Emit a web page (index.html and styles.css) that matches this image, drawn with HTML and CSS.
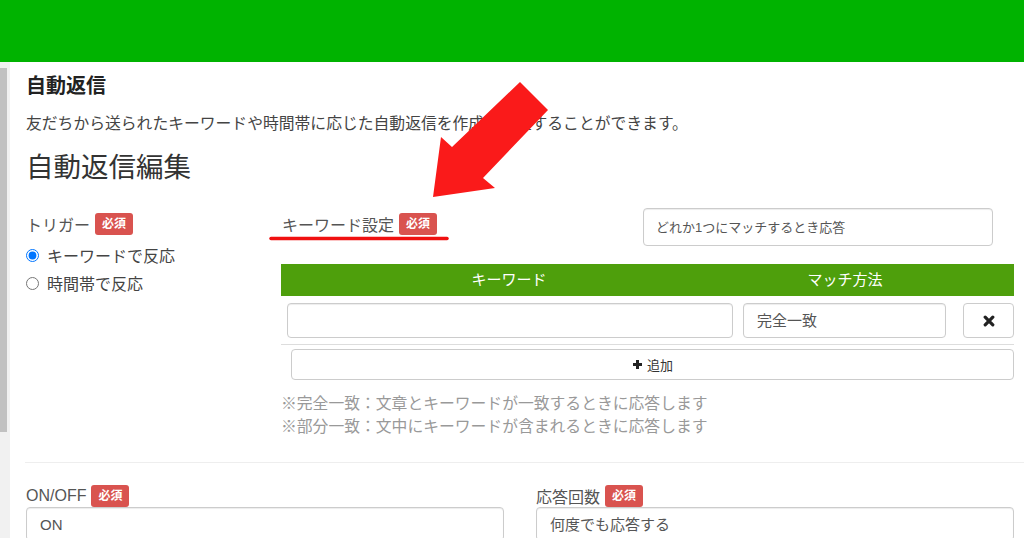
FILE: index.html
```html
<!DOCTYPE html>
<html lang="ja">

<head>
    <meta charset="utf-8">
    <title>自動返信編集</title>
    <link rel="stylesheet" href="styles.css">
</head>

<body>
    <div class="topBar"></div>
    <div class="pageWrapper">
        <div class="sideStrip"><div class="sideThumb"></div></div>
        <div class="mainArea">
            <h2 class="pageTitle">自動返信</h2>
            <p class="pageDesc">友だちから送られたキーワードや時間帯に応じた自動返信を作成・管理することができます。</p>
            <h1 class="editTitle">自動返信編集</h1>

            <div class="triggerForm">
                <div class="triggerCol">
                    <div class="fieldLabel">トリガー<span class="requiredBadge">必須</span></div>
                    <label class="radioRow firstRadio"><input type="radio" name="trigger" checked>キーワードで反応</label>
                    <label class="radioRow"><input type="radio" name="trigger">時間帯で反応</label>
                </div>
                <div class="keywordCol">
                    <div class="keywordTop">
                        <div class="fieldLabel">キーワード設定<span class="requiredBadge">必須</span></div>
                        <select class="formControl matchAny"><option>どれか1つにマッチするとき応答</option></select>
                    </div>
                    <div class="keywordTable">
                        <div class="tableHead">キーワード</div>
                        <div class="tableHead">マッチ方法</div>
                        <div class="tableHead"></div>
                        <div class="tableCell"><input type="text" class="formControl"></div>
                        <div class="tableCell selectCell"><select class="formControl"><option>完全一致</option></select></div>
                        <div class="tableCell cellEnd">
                            <button class="removeButton">
                                <svg width="12" height="12" viewBox="0 0 12 12"><path d="M2.2 2.2L9.8 9.8M9.8 2.2L2.2 9.8" stroke="#222" stroke-width="3.2" stroke-linecap="round"/></svg>
                            </button>
                        </div>
                    </div>
                    <button class="addButton">
                        <svg width="11" height="11" viewBox="0 0 11 11"><path d="M5.5 1v9M1 5.5h9" stroke="#222" stroke-width="3"/></svg>
                        追加
                    </button>
                    <p class="matchNote">※完全一致：文章とキーワードが一致するときに応答します<br>※部分一致：文中にキーワードが含まれるときに応答します</p>
                </div>
            </div>

            <hr class="sectionRule">

            <div class="settingsRow">
                <div class="settingsCol">
                    <div class="fieldLabel">ON/OFF<span class="requiredBadge">必須</span></div>
                    <select class="formControl"><option>ON</option></select>
                </div>
                <div class="settingsCol">
                    <div class="fieldLabel">応答回数<span class="requiredBadge">必須</span></div>
                    <select class="formControl"><option>何度でも応答する</option></select>
                </div>
            </div>
        </div>
    </div>

    <!-- annotation drawn over the screenshot -->
    <svg class="annotation" width="1024" height="538" viewBox="0 0 1024 538">
        <polygon points="520,82 548,110 483,178 495,188 433,197 441,137 452,147" fill="#fa1a1a"/>
        <line x1="271" y1="238.5" x2="447" y2="238.5" stroke="#f01010" stroke-width="3.5" stroke-linecap="round"/>
    </svg>
</body>

</html>
```

FILE: styles.css
```css
body {
    margin: 0;
    font-family: "Liberation Sans", "Noto Sans CJK JP", sans-serif;
    color: #333;
    background-color: #fff;
    overflow: hidden;
}
.topBar {
    height: 62px;
    background-color: #00b300;
}
.pageWrapper {
    display: flex;
}
.sideStrip {
    width: 10px;
    height: 476px;
    flex-shrink: 0;
    background-color: #f1f1f1;
}
.sideThumb {
    width: 7px;
    height: 364px;
    margin-top: 6px;
    background-color: #c1c1c1;
}
.mainArea {
    flex: 1;
    padding: 0 10px 0 16px;
}
.pageTitle {
    margin: 10px 0 0;
    font-size: 20px;
    line-height: 28px;
    font-weight: bold;
    color: #222;
}
.pageDesc {
    margin: 12px 0 0;
    font-size: 15.8px;
    line-height: 24px;
    color: #444;
}
.editTitle {
    margin: 12px 0 0;
    font-size: 27.5px;
    line-height: 40px;
    font-weight: normal;
    color: #333;
}
.triggerForm {
    display: flex;
    margin-top: 20px;
}
.triggerCol {
    width: 255px;
    flex-shrink: 0;
}
.fieldLabel {
    display: flex;
    align-items: center;
    height: 22px;
    margin-top: 5px;
    font-size: 16px;
    color: #555;
}
.requiredBadge {
    display: inline-block;
    width: 38px;
    height: 22px;
    line-height: 22px;
    margin-left: 5px;
    background-color: #d9534f;
    color: #fff;
    border-radius: 3px;
    font-size: 12px;
    font-weight: bold;
    text-align: center;
}
.radioRow {
    display: flex;
    align-items: center;
    height: 28px;
    font-size: 16px;
    color: #444;
}
.firstRadio {
    margin-top: 6px;
}
.radioRow input {
    width: 13px;
    height: 13px;
    margin: 0 8px 0 0;
}
.keywordCol {
    flex: 1;
}
.keywordTop {
    display: flex;
}
.keywordTop .fieldLabel {
    width: 361px;
    padding-left: 1px;
}
.formControl {
    box-sizing: border-box;
    border: 1px solid #ccc;
    border-radius: 4px;
    background-color: #fff;
    font-family: inherit;
    color: #555;
    box-shadow: inset 0 1px 1px rgba(0, 0, 0, .075);
    appearance: none;
    -webkit-appearance: none;
}
.matchAny {
    width: 350px;
    height: 38px;
    padding: 0 12px;
    font-size: 13px;
}
.keywordTable {
    display: grid;
    grid-template-columns: 456px 216px 61px;
    margin-top: 18px;
    border-bottom: 1px solid #ddd;
}
.tableHead {
    height: 32px;
    line-height: 32px;
    background-color: #4e9f0c;
    color: #fff;
    text-align: center;
    font-size: 15px;
}
.tableCell {
    padding: 7px 4px 6px 6px;
}
.tableCell .formControl {
    width: 100%;
    height: 35px;
}
.selectCell {
    padding-right: 7px;
}
.selectCell select {
    padding: 0 13px;
    font-size: 15px;
}
.cellEnd {
    display: flex;
    justify-content: flex-end;
    padding: 7px 0 6px;
}
.removeButton {
    display: flex;
    align-items: center;
    justify-content: center;
    width: 51px;
    height: 35px;
    padding: 0;
    border: 1px solid #ccc;
    border-radius: 4px;
    background-color: #fff;
}
.addButton {
    display: flex;
    align-items: center;
    justify-content: center;
    gap: 4px;
    width: 723px;
    height: 31px;
    margin: 4px 0 0 10px;
    border: 1px solid #ccc;
    border-radius: 4px;
    background-color: #fff;
    font-family: inherit;
    font-size: 13px;
    color: #333;
}
.matchNote {
    margin: 12px 0 0;
    font-size: 15.8px;
    line-height: 23px;
    color: #999;
}
.sectionRule {
    border: 0;
    border-top: 1px solid #eee;
    margin: 24px -10px 0 -1px;
}
.settingsRow {
    display: flex;
    gap: 32px;
    margin-top: 22px;
}
.settingsCol {
    flex: 1;
}
.settingsCol .fieldLabel {
    margin-top: 0;
}
.settingsCol .formControl {
    width: 100%;
    height: 34px;
    padding: 0 13px;
    font-size: 15px;
}
.annotation {
    position: absolute;
    top: 0;
    left: 0;
    pointer-events: none;
}
```
